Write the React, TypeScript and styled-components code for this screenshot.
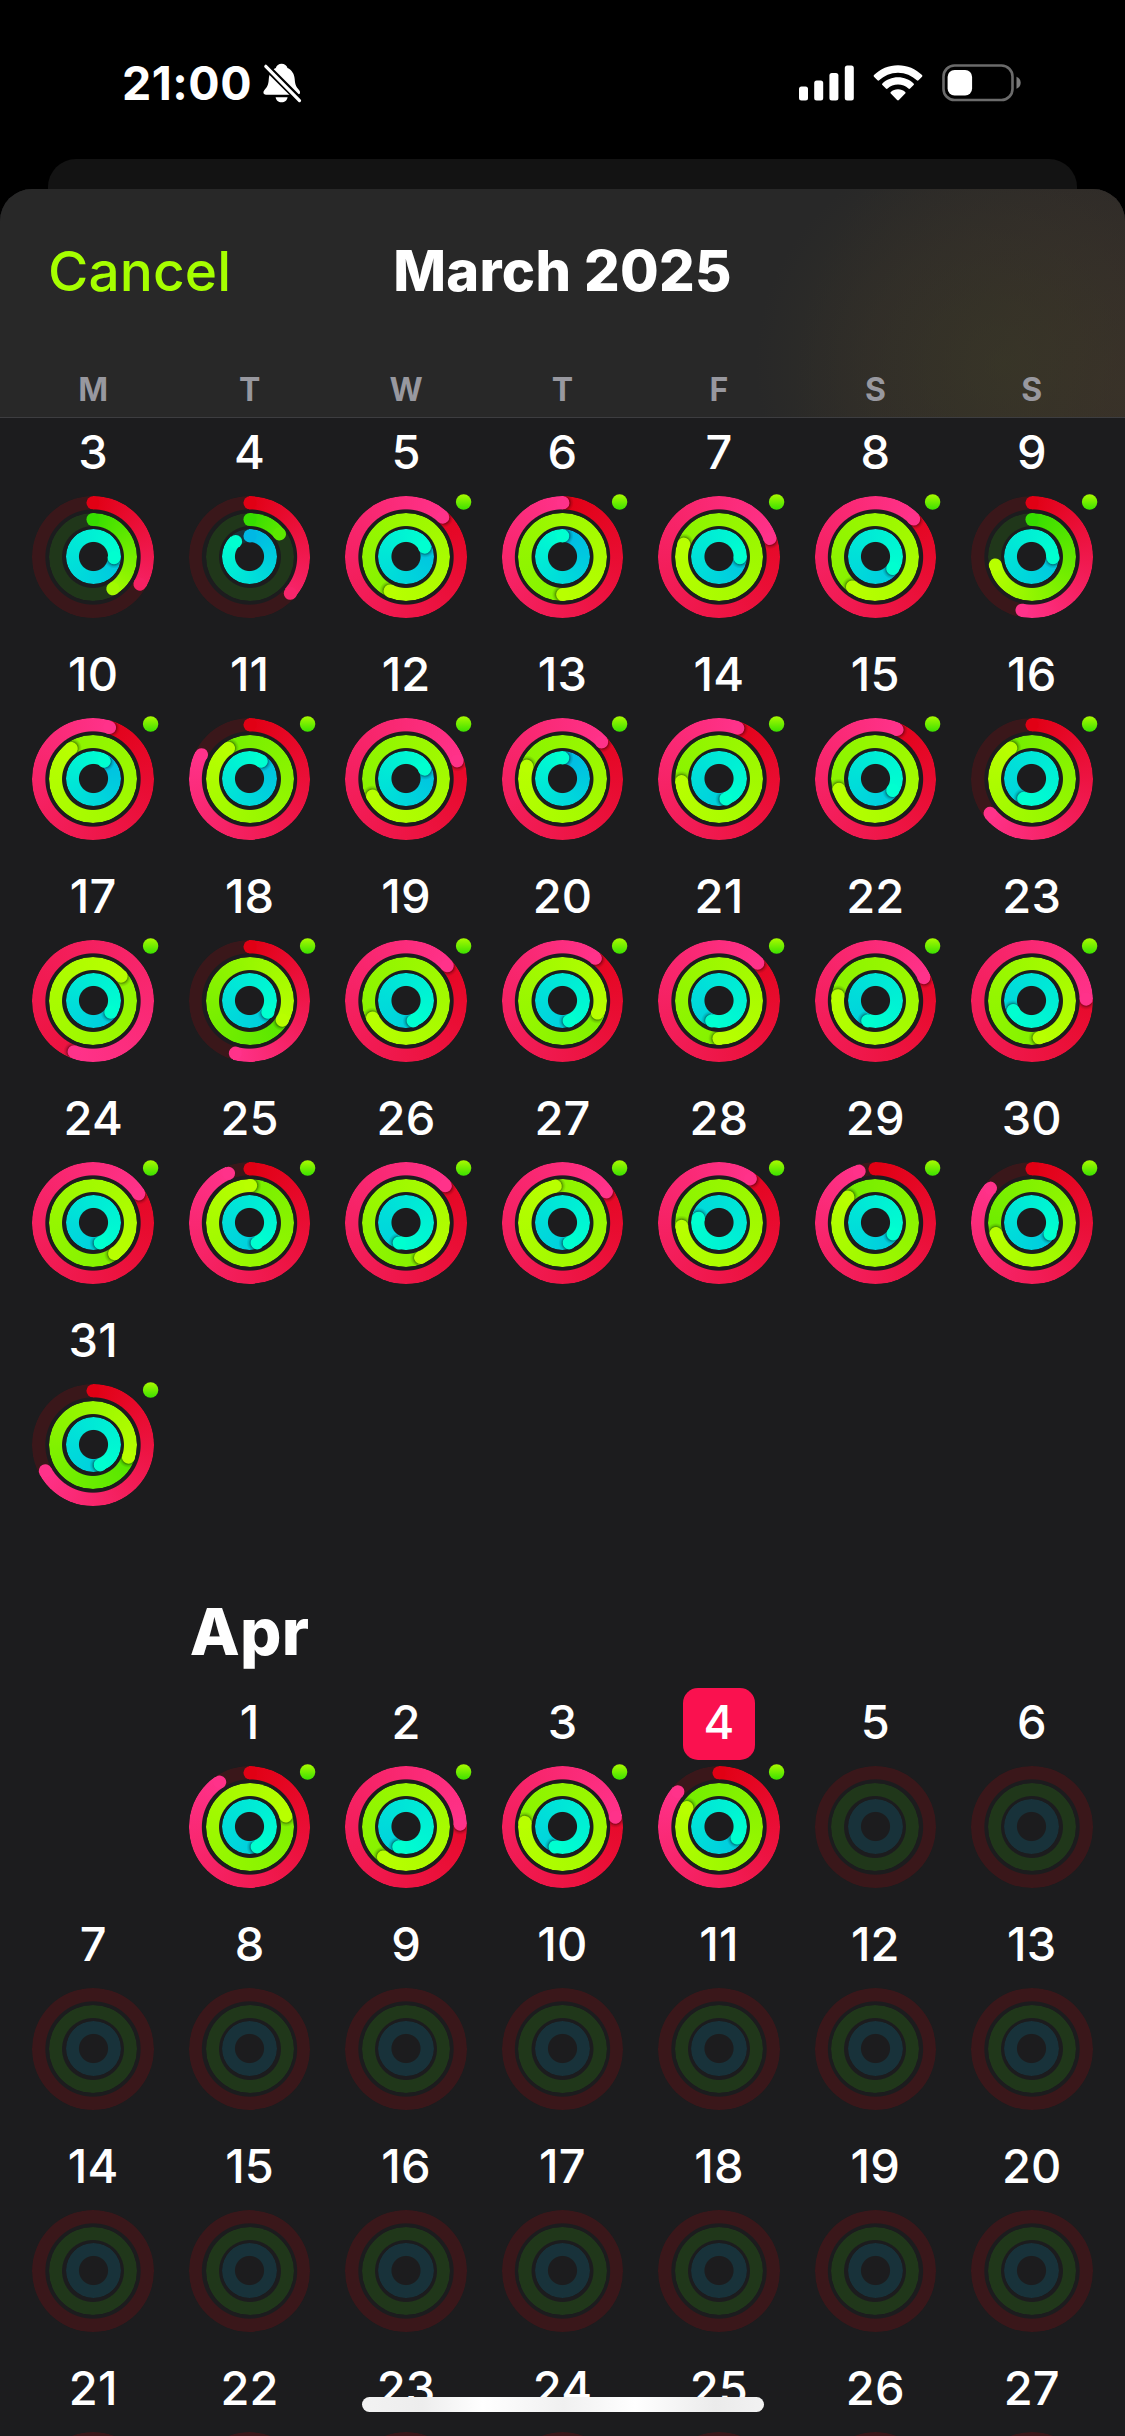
import React from "react";
import styled, { createGlobalStyle } from "styled-components";

const GlobalStyle = createGlobalStyle`
  *, *::before, *::after { box-sizing: border-box; }
  body {
    margin: 0;
    background: #000;
    font-family: Inter, "Liberation Sans", sans-serif;
    -webkit-font-smoothing: antialiased;
  }
`;

/* ---------- data ---------- */

type Progress = [move: number, exercise: number, stand: number];

interface Day {
  n: number;
  rings?: Progress;
  today?: boolean;
  noDot?: boolean;
}

/* Progress is stored in degrees; anything above 360 wraps over itself. */
const march: Day[] = [
  { n: 3, rings: [120, 148, 452], noDot: true },
  { n: 4, rings: [132, 52, 317], noDot: true },
  { n: 5, rings: [402.7, 925, 422] },
  { n: 6, rings: [361, 899, 362] },
  { n: 7, rings: [430, 1010, 452] },
  { n: 8, rings: [405.5, 937, 483] },
  { n: 9, rings: [190.6, 257.7, 452] },
  { n: 10, rings: [377.8, 1044.5, 392] },
  { n: 11, rings: [296.6, 685, 392] },
  { n: 12, rings: [430.4, 963, 422] },
  { n: 13, rings: [407, 1010, 362] },
  { n: 14, rings: [380.3, 986, 521] },
  { n: 15, rings: [384, 974, 483] },
  { n: 16, rings: [230.7, 685.5, 563] },
  { n: 17, rings: [560.4, 1128.6, 482] },
  { n: 18, rings: [195.7, 480.7, 482] },
  { n: 19, rings: [409.5, 963, 520] },
  { n: 20, rings: [398, 828.7, 520] },
  { n: 21, rings: [405.7, 900, 560] },
  { n: 22, rings: [424.4, 998, 560] },
  { n: 23, rings: [448, 889, 603] },
  { n: 24, rings: [417.5, 864.8, 520] },
  { n: 25, rings: [336.7, 721, 520] },
  { n: 26, rings: [406.6, 877, 559] },
  { n: 27, rings: [415, 1069.6, 520] },
  { n: 28, rings: [395.4, 985, 643] },
  { n: 29, rings: [343, 673.7, 481] },
  { n: 30, rings: [310, 613.5, 481] },
  { n: 31, rings: [241.5, 468.8, 520] },
];

const april: Day[] = [
  { n: 1, rings: [326, 793, 520] },
  { n: 2, rings: [447, 937, 560] },
  { n: 3, rings: [439.6, 997, 559] },
  { n: 4, rings: [310.6, 661, 481], today: true },
  ...Array.from({ length: 23 }, (_, i) => ({ n: i + 5 })),
];

/* ---------- activity rings ---------- */

type RGB = [number, number, number];

interface RingSpec {
  key: string;
  r: number;
  track: string;
  from: RGB;
  to: RGB;
}

const SIZE = 122;
const C = SIZE / 2;
const STROKE = 13.1;

const specs: RingSpec[] = [
  { key: "move", r: 54.2, track: "#3a171a", from: [225, 0, 20], to: [255, 50, 138] },
  { key: "exercise", r: 37.5, track: "#20371a", from: [55, 222, 0], to: [184, 255, 0] },
  { key: "stand", r: 21.1, track: "#18323a", from: [0, 184, 228], to: [0, 255, 208] },
];

const mix = (a: RGB, b: RGB, t: number) =>
  `rgb(${a.map((v, i) => Math.round(v + (b[i] - v) * t)).join(",")})`;

/* Short arcs stop part of the way through the colour ramp. */
const tipColour = (s: RingSpec, deg: number) => mix(s.from, s.to, Math.min(1, deg / 180));

const ringFill = (s: RingSpec, deg: number) => {
  if (deg < 360) {
    return `conic-gradient(${mix(s.from, s.to, 0)} 0deg, ${tipColour(s, deg)} ${deg}deg, ${s.track} ${deg}deg)`;
  }
  const tail = (deg - 360) / deg;
  return `conic-gradient(from ${deg % 360}deg, ${mix(s.from, s.to, tail)}, ${tipColour(s, deg)})`;
};

const Stack = styled.div`
  display: grid;
  grid-template: ${SIZE}px / ${SIZE}px;
  margin-top: 5.8px;
  place-items: center;
  > * { grid-area: 1 / 1; }
`;

const Ring = styled.div<{ $r: number }>`
  width: ${(p) => p.$r * 2 + STROKE}px;
  height: ${(p) => p.$r * 2 + STROKE}px;
  border-radius: 50%;
  mask: radial-gradient(
    circle,
    transparent ${(p) => p.$r - STROKE / 2 - 0.5}px,
    #000 ${(p) => p.$r - STROKE / 2 + 0.5}px
  );
`;

const Caps = styled.svg`
  z-index: 1;
  display: block;
  overflow: visible;
`;

const Defs = styled.svg`
  position: absolute;
  width: 0;
  height: 0;
`;

const sector = (r: number) => {
  const a = r + STROKE / 2;
  const b = r - STROKE / 2;
  return `M${C} ${C - a}A${a} ${a} 0 0 1 ${C + a} ${C}L${C + b} ${C}A${b} ${b} 0 0 0 ${C} ${C - b}Z`;
};

const SharedDefs = () => (
  <Defs aria-hidden>
    <defs>
      {specs.map((s) => (
        <radialGradient key={s.key} id={`shade-${s.key}`} gradientUnits="userSpaceOnUse" cx={C + 0.8} cy={C - s.r} r="10">
          <stop offset="0.6" stopColor="#000" stopOpacity="0.4" />
          <stop offset="0.78" stopColor="#000" stopOpacity="0.14" />
          <stop offset="1" stopColor="#000" stopOpacity="0" />
        </radialGradient>
      ))}
      <linearGradient id="dot" x1="0" y1="0" x2="0" y2="1">
        <stop offset="0" stopColor="#a9fa00" />
        <stop offset="1" stopColor="#3ce000" />
      </linearGradient>
    </defs>
  </Defs>
);

const ActivityRings = ({ rings, dot }: { rings?: Progress; dot: boolean }) => (
  <Stack>
    {specs.map((s, i) => (
      <Ring key={s.key} $r={s.r} style={{ background: rings ? ringFill(s, rings[i]) : s.track }} />
    ))}
    {rings && (
      <Caps width={SIZE} height={SIZE} viewBox={`0 0 ${SIZE} ${SIZE}`}>
        {specs.map((s, i) => {
          const deg = rings[i];
          return (
            <g key={s.key}>
              {deg < 360 && <circle cx={C} cy={C - s.r} r={STROKE / 2} fill={mix(s.from, s.to, 0)} />}
              <g transform={`rotate(${deg % 360} ${C} ${C})`}>
                {deg >= 360 && <path d={sector(s.r)} fill={`url(#shade-${s.key})`} />}
                <circle cx={C} cy={C - s.r} r={STROKE / 2} fill={tipColour(s, deg)} />
              </g>
            </g>
          );
        })}
        {dot && <circle cx={C + 57.6} cy={C - 55} r="7.7" fill="url(#dot)" />}
      </Caps>
    )}
  </Stack>
);

/* ---------- layout ---------- */

const Screen = styled.main`
  position: relative;
  display: flex;
  flex-direction: column;
  width: 1125px;
  height: 2436px;
  overflow: hidden;
  background: #000;
  color: #fff;
`;

const StatusBar = styled.div`
  display: flex;
  flex: none;
  justify-content: space-between;
  align-items: center;
  height: 159px;
  padding: 6px 104px 0 122px;
`;

const StatusGroup = styled.div<{ $gap: number }>`
  display: flex;
  align-items: center;
  gap: ${(p) => p.$gap}px;
`;

const Time = styled.span`
  width: 132px;
  font-size: 46.5px;
  line-height: 56px;
  font-weight: 730;
  letter-spacing: 0.5px;
  white-space: nowrap;
`;

const BackSheet = styled.div`
  flex: none;
  height: 30px;
  margin: 0 48px;
  border-radius: 28px 28px 0 0;
  background: #131313;
`;

const Sheet = styled.section`
  flex: 1;
  min-height: 0;
  overflow: hidden;
  border-radius: 32px 32px 0 0;
  background: #1c1c1e;
`;

const Header = styled.header`
  display: flex;
  flex-direction: column;
  justify-content: space-between;
  height: 229px;
  border-bottom: 1px solid #3d3d40;
  background:
    radial-gradient(ellipse 250px 230px at 1005px 175px, rgba(60, 60, 38, 0.55), rgba(58, 54, 40, 0.4) 55%, rgba(50, 48, 42, 0)),
    radial-gradient(ellipse 330px 330px at 1125px 200px, rgba(72, 52, 42, 0.5), rgba(60, 48, 42, 0)),
    #282828;
`;

const TitleRow = styled.div`
  display: grid;
  grid-template-columns: 1fr auto 1fr;
  align-items: center;
  height: 164px;
  padding: 0 48px;
`;

const Cancel = styled.button`
  justify-self: start;
  padding: 0;
  border: 0;
  background: none;
  color: #a6ff00;
  font: 500 55px/66px Inter, "Liberation Sans", sans-serif;
  letter-spacing: 0.1px;
`;

const Title = styled.h1`
  margin: 0;
  font-size: 56px;
  line-height: 66px;
  font-weight: 770;
  letter-spacing: 0.3px;
`;

const Week = styled.div`
  display: grid;
  grid-template-columns: repeat(7, 1fr);
  padding: 0 15px;
`;

const Weekday = styled.span`
  color: #98989f;
  font-size: 32px;
  line-height: 55px;
  font-weight: 700;
  text-align: center;
`;

const Month = styled(Week)`
  grid-auto-rows: 222px;
`;

const MonthHeading = styled(Week)`
  height: 160px;
  padding-top: 64px;
`;

const MonthName = styled.h2`
  grid-column: 2;
  margin: 0;
  font-size: 65px;
  line-height: 80px;
  font-weight: 770;
  text-align: center;
  letter-spacing: 0.3px;
`;

const DayCell = styled.div<{ $column?: number }>`
  display: flex;
  flex-direction: column;
  align-items: center;
  grid-column-start: ${(p) => p.$column ?? "auto"};
`;

const DayNumber = styled.span<{ $today?: boolean }>`
  display: flex;
  flex: none;
  justify-content: center;
  width: 72px;
  height: 72px;
  padding-bottom: 4px;
  border-radius: 15px;
  background: ${(p) => (p.$today ? "#fa114f" : "transparent")};
  font-size: 47px;
  line-height: 68px;
  font-weight: 550;
  letter-spacing: 0.2px;
`;

const HomeIndicator = styled.div`
  position: absolute;
  left: 362px;
  bottom: 24px;
  width: 402px;
  height: 15px;
  border-radius: 8px;
  background: linear-gradient(90deg, #f2f2f2, #ededed 15%, #fff 30%, #f0f0f0 50%, #fff 68%, #ebebeb 88%, #f2f2f2);
`;

/* ---------- status icons ---------- */

const BellSlash = () => (
  <svg width="39" height="40" viewBox="0 0 39 40">
    <path
      d="M18.600 0.800c2.900 0 5.200 1.700 5.900 4.200 4.300 2 6.900 6 7.200 11 .4 6.200 1.700 8 4.500 11.300 1.700 2 .8 4.400-1.800 4.400H3.100c-2.600 0-3.500-2.400-1.800-4.400 2.800-3.300 4.100-5.100 4.500-11.300.3-5 2.700-9 7-11 .7-2.500 2.900-4.200 5.800-4.200zM12.600 34.200h12c-.4 3-2.900 5-6 5s-5.600-2-6-5z"
      fill="#fff"
    />
    <path d="M2 2.500L38.500 39" stroke="#000" strokeWidth="7" />
    <path d="M2.800 3.300L36.500 37.600" stroke="#fff" strokeWidth="3.200" strokeLinecap="round" />
  </svg>
);

const Signal = () => (
  <svg width="55" height="36" viewBox="0 0 55 36" fill="#fff">
    <rect x="0" y="21.500" width="9" height="14" rx="2.500" />
    <rect x="15.200" y="15.500" width="9" height="20" rx="2.500" />
    <rect x="30.400" y="8" width="9" height="27.500" rx="2.500" />
    <rect x="45.800" y="0.500" width="9" height="35" rx="2.500" />
  </svg>
);

const Wifi = () => (
  <svg width="50" height="36" viewBox="0 0 50 36" fill="#fff">
    <path d="M25 0.300C34.300 0.300 42.800 4 49 10.100c.5.5.5 1.200 0 1.700l-3.500 3.500c-.5.500-1.200.5-1.700 0C38.900 10.600 32.300 7.700 25 7.700S11.100 10.600 6.200 15.300c-.5.500-1.200.5-1.700 0L1 11.800c-.5-.5-.5-1.200 0-1.700C7.200 4 15.700.3 25 .3z" />
    <path d="M25 12.300c6 0 11.500 2.300 15.600 6.100.5.500.5 1.200 0 1.700l-3.500 3.500c-.5.500-1.200.5-1.700 0-2.700-2.500-6.400-4-10.400-4s-7.700 1.500-10.400 4c-.5.500-1.200.5-1.700 0l-3.500-3.500c-.5-.5-.5-1.200 0-1.700C13.500 14.600 19 12.300 25 12.300z" />
    <path d="M25 24.200c2.800 0 5.300 1 7.200 2.700.5.500.5 1.200 0 1.700l-6.300 6.500c-.5.500-1.300.5-1.800 0l-6.300-6.500c-.5-.5-.5-1.200 0-1.700 1.900-1.700 4.400-2.700 7.200-2.700z" />
  </svg>
);

const Battery = () => (
  <svg width="79" height="38" viewBox="0 0 79 38">
    <rect x="1.500" y="1.500" width="69" height="34.500" rx="11" fill="none" stroke="#6b6b6b" strokeWidth="2.600" />
    <rect x="5.600" y="6" width="24.500" height="25.500" rx="7" fill="#fff" />
    <path d="M74.500 12.800c2.600 1 4.200 3.300 4.200 6s-1.600 5-4.200 6z" fill="#7a7a7a" />
  </svg>
);

/* ---------- app ---------- */

const DayItem = ({ day, column }: { day: Day; column?: number }) => (
  <DayCell $column={column}>
    <DayNumber $today={day.today}>{day.n}</DayNumber>
    <ActivityRings rings={day.rings} dot={!!day.rings && !day.noDot} />
  </DayCell>
);

export default function App() {
  return (
    <>
      <GlobalStyle />
      <SharedDefs />
      <Screen>
        <StatusBar>
          <StatusGroup $gap={9}>
            <Time>21:00</Time>
            <BellSlash />
          </StatusGroup>
          <StatusGroup $gap={19}>
            <Signal />
            <Wifi />
            <Battery />
          </StatusGroup>
        </StatusBar>
        <BackSheet />
        <Sheet>
          <Header>
            <TitleRow>
              <Cancel>Cancel</Cancel>
              <Title>March 2025</Title>
            </TitleRow>
            <Week>
              {["M", "T", "W", "T", "F", "S", "S"].map((d, i) => (
                <Weekday key={i}>{d}</Weekday>
              ))}
            </Week>
          </Header>
          <Month>
            {march.map((d) => (
              <DayItem key={d.n} day={d} />
            ))}
          </Month>
          <MonthHeading>
            <MonthName>Apr</MonthName>
          </MonthHeading>
          <Month>
            {april.map((d) => (
              <DayItem key={d.n} day={d} column={d.n === 1 ? 2 : undefined} />
            ))}
          </Month>
        </Sheet>
        <HomeIndicator />
      </Screen>
    </>
  );
}
